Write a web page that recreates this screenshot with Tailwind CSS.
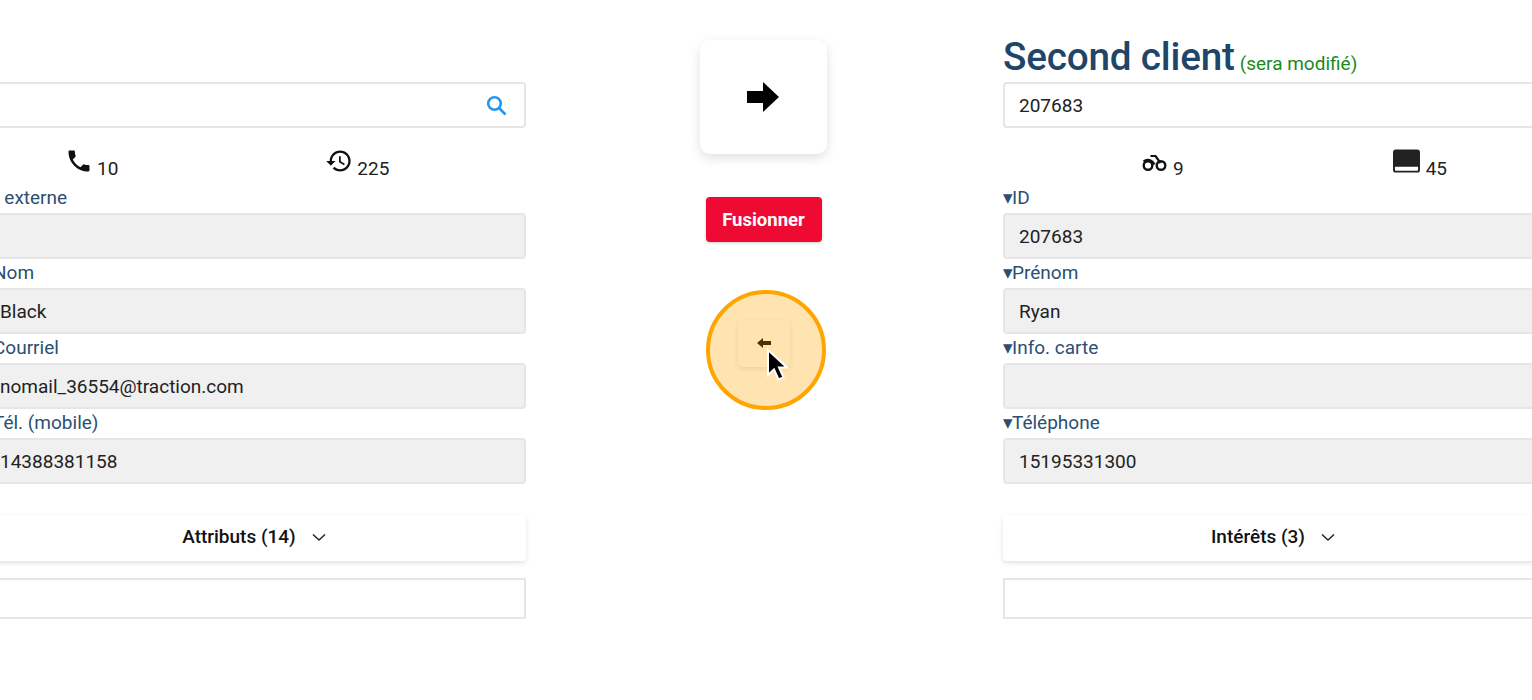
<!DOCTYPE html>
<html lang="fr">
<head>
  <meta charset="UTF-8">
  <title>Fusion de clients</title>
  <script src="https://cdn.jsdelivr.net/npm/@tailwindcss/browser@4"></script>
</head>
<body class="bg-white overflow-hidden h-[700px] font-['Roboto',sans-serif] text-[19px] text-[#222]">
  <div class="relative flex w-[1561px] h-[700px] ml-[-16px]">

    <!-- premier client -->
    <section class="w-[542px] shrink-0 pt-[36px]">
      <div class="h-[46px]"></div>
      <div class="h-[46px] flex items-center justify-end pr-[17px] bg-white border-2 border-[#e6e6e6] rounded-[4px]">
        <svg class="w-[21px] h-[21px]" viewBox="0 0 21 21" fill="none" stroke="#2196f3" stroke-width="2.600"><circle cx="8.500" cy="8.500" r="6.300"/><path d="M13 13l6.500 6.500"/></svg>
      </div>
      <div class="h-[56px] flex items-start pt-[21px]">
        <div class="flex items-start ml-[81px]">
          <svg class="w-[28px] h-[28px] mt-[-2px]" viewBox="0 0 24 24" fill="#111"><path d="M6.620 10.790c1.440 2.830 3.760 5.140 6.590 6.590l2.200-2.200c.27-.27.67-.36 1.020-.24 1.120.37 2.330.57 3.570.57.55 0 1 .45 1 1V20c0 .55-.45 1-1 1-9.390 0-17-7.610-17-17 0-.55.45-1 1-1h3.500c.55 0 1 .45 1 1 0 1.250.2 2.450.57 3.570.11.35.03.74-.25 1.020l-2.200 2.200z"/></svg>
          <span class="ml-[4px] mt-[9px] leading-[22px]">10</span>
        </div>
        <div class="flex items-start ml-[206px]">
          <svg class="w-[28px] h-[28px] mt-[-2px] ml-[1px]" viewBox="0 0 24 24" fill="#111"><path d="M13 3c-4.970 0-9 4.030-9 9H1l3.890 3.890.07.14L9 12H6c0-3.870 3.130-7 7-7s7 3.130 7 7-3.130 7-7 7c-1.930 0-3.680-.79-4.940-2.060l-1.420 1.420C8.270 19.990 10.510 21 13 21c4.970 0 9-4.030 9-9s-4.030-9-9-9zm-1 5v5l4.280 2.540.72-1.210-3.500-2.080V8H12z"/></svg>
          <span class="ml-[4px] mt-[9px] leading-[22px]">225</span>
        </div>
      </div>

      <label class="block h-[29px] leading-[28px] text-[#2b4f73]"><span class="tracking-[-1px]">▾</span><span class="tracking-[-0.5px]">°</span> externe</label>
      <div class="h-[46px] px-[14px] pt-[2px] flex items-center bg-[#f0f0f0] border-2 border-[#e6e6e6] rounded-[4px]"></div>
      <label class="block h-[29px] leading-[28px] text-[#2b4f73]"><span class="tracking-[-1px]">▾</span>Nom</label>
      <div class="h-[46px] px-[14px] pt-[2px] flex items-center bg-[#f0f0f0] border-2 border-[#e6e6e6] rounded-[4px]">Black</div>
      <label class="block h-[29px] leading-[28px] text-[#2b4f73]"><span class="tracking-[-1px]">▾</span>Courriel</label>
      <div class="h-[46px] px-[14px] pt-[2px] flex items-center bg-[#f0f0f0] border-2 border-[#e6e6e6] rounded-[4px]">nomail_36554@traction.com</div>
      <label class="block h-[29px] leading-[28px] text-[#2b4f73]"><span class="tracking-[-1px]">▾</span>Tél. (mobile)</label>
      <div class="h-[46px] px-[14px] pt-[2px] flex items-center bg-[#f0f0f0] border-2 border-[#e6e6e6] rounded-[4px]">14388381158</div>

      <div class="mt-[31px] h-[46px] pb-[2px] flex items-center justify-center gap-[14px] bg-white rounded-[4px] shadow-[0_2px_5px_rgba(0,0,0,0.12)] font-medium text-[#111]">
        <span>Attributs (14)</span>
        <svg class="w-[18px] h-[18px]" viewBox="0 0 18 18" fill="none" stroke="#222" stroke-width="1.500"><path d="M3 6.500l6 5.500 6-5.500"/></svg>
      </div>
      <div class="mt-[17px] h-[41px] bg-white border-2 border-[#e6e6e6]"></div>
    </section>

    <!-- actions -->
    <section class="w-[477px] shrink-0 pt-[40px] pr-[2px] flex flex-col items-center">
      <button class="w-[127px] h-[114px] pr-[2px] flex items-center justify-center bg-white rounded-[10px] shadow-[0_4px_12px_rgba(0,0,0,0.12)]">
        <svg class="w-[32px] h-[30px]" viewBox="0 0 32 30" fill="#000"><path d="M0 9h16V0l16 15-16 15v-9H0z"/></svg>
      </button>
      <button class="mt-[43px] w-[116px] h-[45px] pt-[2px] bg-[#ef0a33] text-white text-[18.500px] font-bold rounded-[4px] shadow-[0_1px_3px_rgba(0,0,0,0.2)]">Fusionner</button>
      <button class="mt-[78px] w-[52px] h-[47px] flex items-center justify-center bg-white rounded-[5px] shadow-[0_2px_5px_rgba(0,0,0,0.1)] pb-[2px]">
        <svg class="w-[14px] h-[10px]" viewBox="0 0 14 10" fill="#000"><path d="M14 3H6V0L0 5l6 5V7h8z"/></svg>
      </button>
    </section>

    <!-- second client -->
    <section class="w-[542px] shrink-0 pt-[36px]">
      <div class="h-[46px] flex items-baseline whitespace-nowrap">
        <h2 class="text-[38.700px] leading-[42px] font-medium text-[#1f4668] tracking-[-0.2px]">Second client</h2>
        <span class="ml-[5px] text-[19px] text-[#1a8a1a]">(sera modifié)</span>
      </div>
      <div class="h-[46px] px-[14px] pt-[2px] flex items-center bg-white border-2 border-[#e6e6e6] rounded-[4px]">207683</div>
      <div class="h-[56px] flex items-start pt-[21px]">
        <div class="flex items-start ml-[139px]">
          <svg class="w-[25px] h-[18px] mt-[5px]" viewBox="0 0 25 18" fill="none" stroke="#111"><circle cx="6" cy="11.500" r="4.300" stroke-width="2.400"/><circle cx="19" cy="11.500" r="4.300" stroke-width="2.400"/><path d="M1.500 7.500C5 4.500 10 5.500 12.500 10.500M8.500 2h5l5 7" stroke-width="2.200"/></svg>
          <span class="ml-[6px] mt-[9px] leading-[22px]">9</span>
        </div>
        <div class="flex items-start ml-[209px]">
          <svg class="w-[27px] h-[24px]" viewBox="0 0 28 24" fill="#222"><path fill-rule="evenodd" d="M3 0h22a3 3 0 0 1 3 3v18a3 3 0 0 1-3 3H3a3 3 0 0 1-3-3V3a3 3 0 0 1 3-3zM2 18v3a1 1 0 0 0 1 1h22a1 1 0 0 0 1-1v-3z"/></svg>
          <span class="ml-[6px] mt-[9px] leading-[22px]">45</span>
        </div>
      </div>

      <label class="block h-[29px] leading-[28px] text-[#2b4f73]"><span class="tracking-[-1px]">▾</span>ID</label>
      <div class="h-[46px] px-[14px] pt-[2px] flex items-center bg-[#f0f0f0] border-2 border-[#e6e6e6] rounded-[4px]">207683</div>
      <label class="block h-[29px] leading-[28px] text-[#2b4f73]"><span class="tracking-[-1px]">▾</span>Prénom</label>
      <div class="h-[46px] px-[14px] pt-[2px] flex items-center bg-[#f0f0f0] border-2 border-[#e6e6e6] rounded-[4px]">Ryan</div>
      <label class="block h-[29px] leading-[28px] text-[#2b4f73]"><span class="tracking-[-1px]">▾</span>Info. carte</label>
      <div class="h-[46px] px-[14px] pt-[2px] flex items-center bg-[#f0f0f0] border-2 border-[#e6e6e6] rounded-[4px]"></div>
      <label class="block h-[29px] leading-[28px] text-[#2b4f73]"><span class="tracking-[-1px]">▾</span>Téléphone</label>
      <div class="h-[46px] px-[14px] pt-[2px] flex items-center bg-[#f0f0f0] border-2 border-[#e6e6e6] rounded-[4px]">15195331300</div>

      <div class="mt-[31px] h-[46px] pb-[2px] flex items-center justify-center gap-[14px] bg-white rounded-[4px] shadow-[0_2px_5px_rgba(0,0,0,0.12)] font-medium text-[#111]">
        <span>Intérêts (3)</span>
        <svg class="w-[18px] h-[18px]" viewBox="0 0 18 18" fill="none" stroke="#222" stroke-width="1.500"><path d="M3 6.500l6 5.500 6-5.500"/></svg>
      </div>
      <div class="mt-[17px] h-[41px] bg-white border-2 border-[#e6e6e6]"></div>
    </section>

    <!-- repère du tutoriel, par-dessus le bouton -->
    <div class="absolute left-[722px] top-[290px] w-[120px] h-[120px] rounded-full bg-[#ffa500]/30 border-4 border-[#ffa500]"></div>
    <svg class="absolute left-[782px] top-[348px] w-[22px] h-[34px]" viewBox="0 0 22 34">
      <path d="M2 2v25l6-5.500 4.500 10 5-2.200-4.500-9.800h8z" fill="#000" stroke="#fff" stroke-width="2"/>
    </svg>
  </div>
</body>
</html>
